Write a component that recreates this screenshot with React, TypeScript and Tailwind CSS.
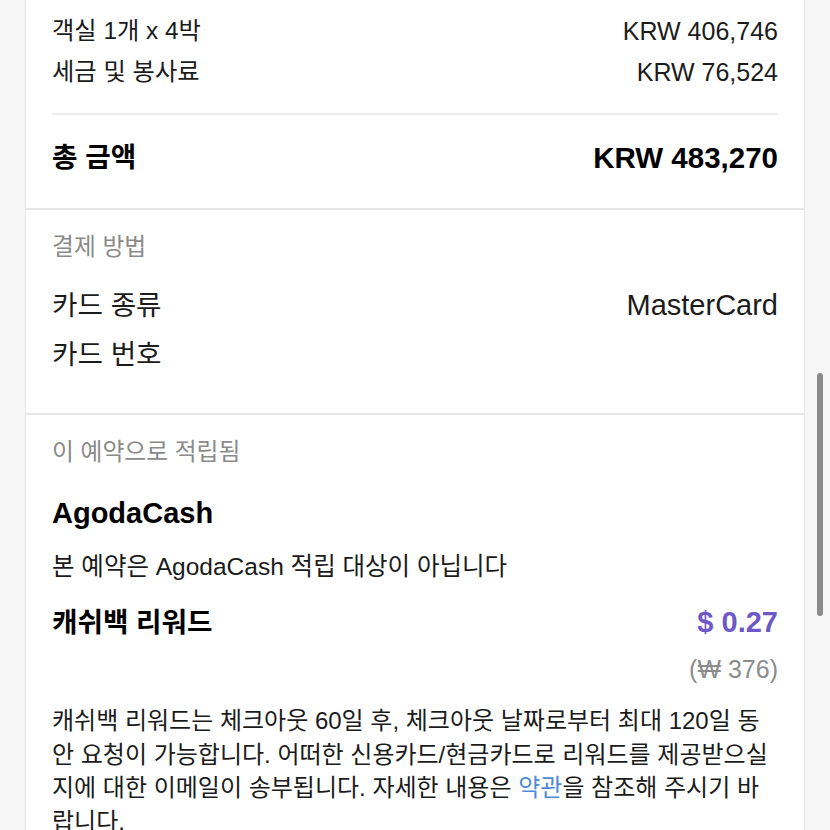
const font = "font-['Liberation_Sans','Noto_Sans_CJK_KR',sans-serif]";

const paragraph = [
  "캐쉬백 리워드는 체크아웃 60일 후, 체크아웃 날짜로부터 최대 120일 동",
  "안 요청이 가능합니다. 어떠한 신용카드/현금카드로 리워드를 제공받으실",
];

export default function App() {
  return (
    <div className={`relative h-[830px] w-[830px] overflow-hidden bg-[#f6f6f6] ${font} text-[#1b1b1b]`}>
      {/* Booking summary card */}
      <div className="ml-[25px] flex h-full w-[780px] flex-col border-x border-[#e9e9e9] bg-white">
        {/* Price breakdown */}
        <section className="px-[26px] pt-[11px] pb-[32px]">
          <div className="flex h-[41px] items-center justify-between">
            <span className="text-[24.3px]">객실 1개 x 4박</span>
            <span className="text-[25px]">KRW 406,746</span>
          </div>
          <div className="flex h-[41px] items-center justify-between">
            <span className="text-[24.3px]">세금 및 봉사료</span>
            <span className="text-[25px]">KRW 76,524</span>
          </div>
          <div className="mt-[20px] h-[2px] bg-[#ececec]" />
          <div className="mt-[25px] flex h-[36px] items-center justify-between font-bold text-black">
            <span className="text-[27.7px]">총 금액</span>
            <span className="text-[29.5px]">KRW 483,270</span>
          </div>
        </section>

        {/* Payment method */}
        <section className="border-t-2 border-[#e6e6e6] px-[26px] pt-[21px] pb-[34px]">
          <div className="flex h-[32px] items-center text-[23.8px] text-[#8a8a8a]">결제 방법</div>
          <div className="mt-[18px] flex h-[49px] items-center justify-between">
            <span className="text-[27.7px]">카드 종류</span>
            <span className="text-[29px]">MasterCard</span>
          </div>
          <div className="flex h-[49px] items-center">
            <span className="text-[27.7px]">카드 번호</span>
          </div>
        </section>

        {/* Rewards */}
        <section className="border-t-2 border-[#e6e6e6] px-[26px] pt-[21px]">
          <div className="flex h-[32px] items-center text-[23.8px] text-[#8a8a8a]">이 예약으로 적립됨</div>
          <div className="mt-[26px] flex h-[40px] items-center text-[29px] font-bold text-black">AgodaCash</div>
          <div className="mt-[16px] flex h-[34px] items-center text-[24.5px]">본 예약은 AgodaCash 적립 대상이 아닙니다</div>
          <div className="mt-[19px] flex h-[40px] items-center justify-between font-bold">
            <span className="text-[27.7px] text-black">캐쉬백 리워드</span>
            <span className="text-[29px] text-[#6d58c6]">$ 0.27</span>
          </div>
          <div className="mt-[10px] flex h-[34px] items-center justify-end text-[25px] text-[#8c8c8c]">(₩ 376)</div>
          <p className="mt-[17px] text-[24px] leading-[33.5px] whitespace-nowrap">
            {paragraph.map((line) => (
              <span key={line} className="block">
                {line}
              </span>
            ))}
            <span className="block">
              지에 대한 이메일이 송부됩니다. 자세한 내용은 <span className="text-[#4f8ad8]">약관</span>을 참조해 주시기 바
            </span>
            <span className="block">랍니다.</span>
          </p>
        </section>
      </div>

      {/* Scrollbar thumb */}
      <div className="absolute top-[373px] left-[817px] h-[243px] w-[6px] rounded-full bg-[#8b8b8b]" />
    </div>
  );
}
